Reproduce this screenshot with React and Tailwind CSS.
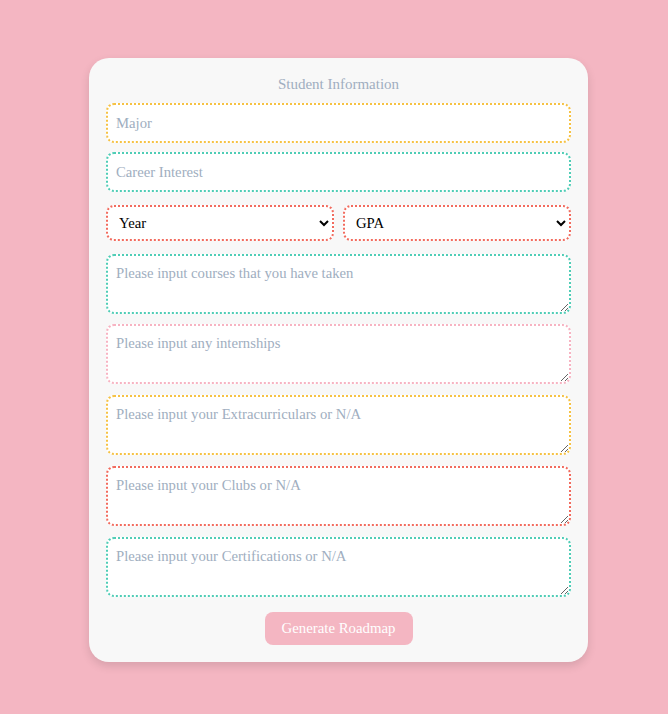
import React from "react";

export default function App() {
  const ta =
    "block w-full h-[60px] rounded-lg border-2 border-dotted bg-white px-2 py-[8px] text-[14.7px] leading-[18px] text-gray-700 placeholder:text-[#a0aec0] outline-none";
  return (
    <div className="min-h-[714px] w-full bg-[#f4b6c2] pt-[58px]" style={{ fontFamily: "'Liberation Serif', serif" }}>
      <div className="ml-[89px] w-[499px] rounded-[20px] bg-[#f8f8f8] px-[17px] pt-[18px] pb-[17px] shadow-[0_4px_10px_rgba(0,0,0,0.12)]">
        <h2 className="text-center text-[15px] leading-[16px] text-[#a0aec0]">Student Information</h2>
        <div className="mt-[11px] flex flex-col">
          <input
            placeholder="Major"
            className="h-[40px] w-full rounded-lg border-2 border-dotted border-[#f6c244] bg-white px-2 text-[14.7px] text-gray-700 placeholder:text-[#a0aec0] outline-none"
          />
          <input
            placeholder="Career Interest"
            className="mt-[9px] h-[40px] w-full rounded-lg border-2 border-dotted border-[#4fcdb6] bg-white px-2 text-[14.7px] text-gray-700 placeholder:text-[#a0aec0] outline-none"
          />
          <div className="mt-[13px] flex gap-[9px]">
            <select className="h-[36px] flex-1 rounded-lg border-2 border-dotted border-[#f26b5e] bg-white pl-[7px] pr-[10px] text-[14.7px] text-black outline-none">
              <option>Year</option>
            </select>
            <select className="h-[36px] flex-1 rounded-lg border-2 border-dotted border-[#f26b5e] bg-white pl-[7px] pr-[10px] text-[14.7px] text-black outline-none">
              <option>GPA</option>
            </select>
          </div>
          <textarea placeholder="Please input courses that you have taken" className={ta + " mt-[13px] border-[#4fcdb6]"} />
          <textarea placeholder="Please input any internships" className={ta + " mt-[10px] border-[#f7b3c2]"} />
          <textarea placeholder="Please input your Extracurriculars or N/A" className={ta + " mt-[11px] border-[#f6c244]"} />
          <textarea placeholder="Please input your Clubs or N/A" className={ta + " mt-[11px] border-[#f26b5e]"} />
          <textarea placeholder="Please input your Certifications or N/A" className={ta + " mt-[11px] border-[#4fcdb6]"} />
          <div className="mt-[15px] flex justify-center">
            <button className="h-[33px] w-[148px] rounded-lg bg-[#f4b6c2] text-[14.8px] text-white">Generate Roadmap</button>
          </div>
        </div>
      </div>
    </div>
  );
}
